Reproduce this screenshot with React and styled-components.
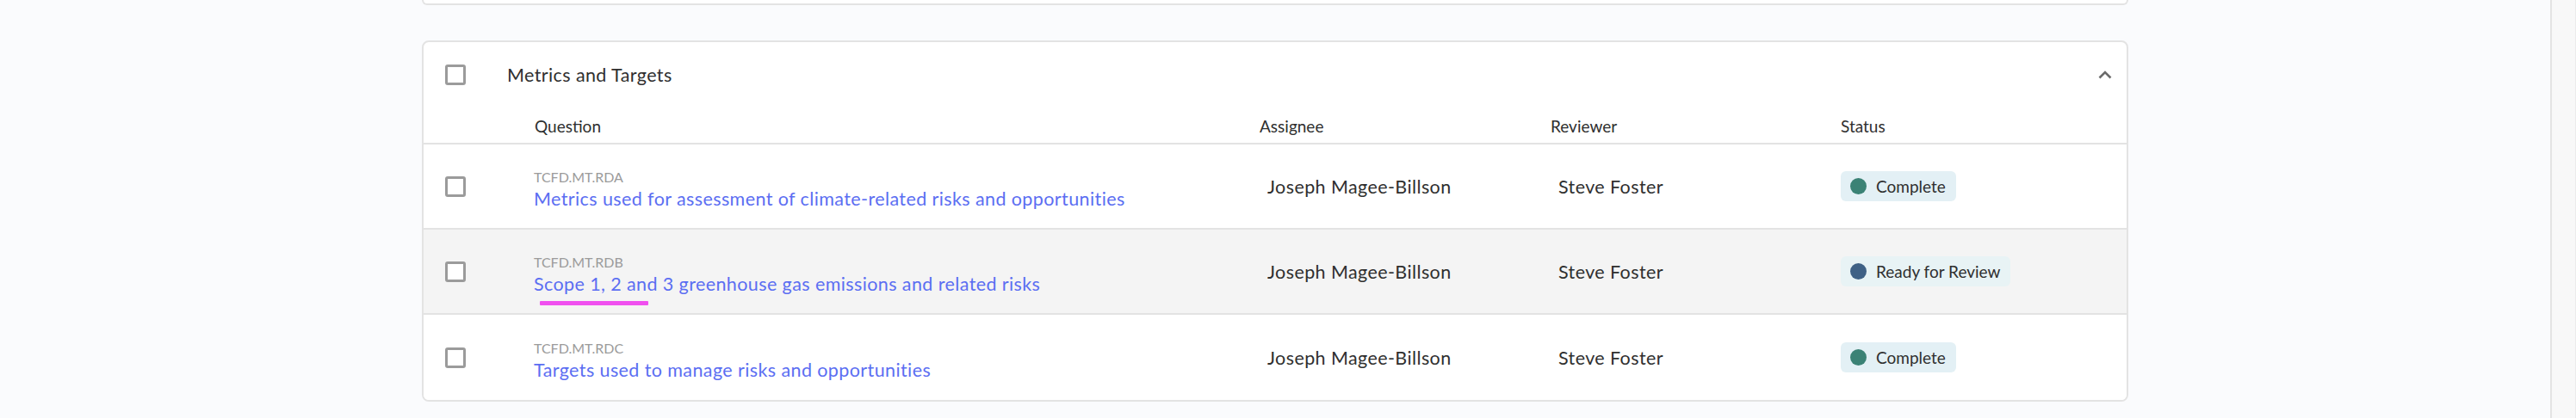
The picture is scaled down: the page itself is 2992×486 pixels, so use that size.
import React from "react";
import styled, { createGlobalStyle } from "styled-components";

const GlobalStyle = createGlobalStyle`
  html, body {
    margin: 0;
    padding: 0;
    background: #fafbfd;
    font-family: "Lato", "Noto Sans", sans-serif;
    color: #333;
  }
  #root { min-height: 486px; }
`;

const Page = styled.div`
  display: flex;
  height: 486px;
  overflow: hidden;
`;

const Main = styled.main`
  flex: 1;
  display: flex;
  flex-direction: column;
  align-items: center;
`;

const ScrollTrack = styled.div`
  box-sizing: content-box;
  width: 27px;
  border-left: 2px solid #e4e4e4;
  border-right: 1px solid #ececec;
  background: #f8f8f8;
`;

const PrevCardEdge = styled.div`
  box-sizing: border-box;
  width: 1982px;
  height: 6px;
  background: #fff;
  border: 2px solid #e3e3e3;
  border-top: none;
  border-radius: 0 0 8px 8px;
`;

const Card = styled.section`
  box-sizing: border-box;
  width: 1982px;
  margin-top: 41px;
  background: #fff;
  border: 2px solid #e3e3e3;
  border-radius: 8px;
  overflow: hidden;
`;

const CardHeader = styled.div`
  display: flex;
  align-items: center;
  height: 76px;
  padding: 0 17px 0 25px;
`;

const Title = styled.h3`
  flex: 1;
  margin: 0 0 0 48px;
  font-size: 21.5px;
  font-weight: 400;
  letter-spacing: 0.4px;
  color: #2f2f2f;
`;

const Checkbox = styled.span`
  box-sizing: border-box;
  display: inline-block;
  width: 24px;
  height: 24px;
  border: 3px solid #9b9b9b;
  border-radius: 3px;
  background: #fff;
`;

const Chevron = styled.svg`
  display: block;
  width: 16px;
  height: 10px;
`;

const columns = "128px 843px 338px 337px 1fr";

const HeadRow = styled.div`
  display: grid;
  grid-template-columns: ${columns};
  align-items: center;
  box-sizing: border-box;
  height: 43px;
  padding-top: 2px;
  border-bottom: 2px solid #e3e3e3;
`;

const HeadCell = styled.div`
  font-size: 19px;
  color: #2f2f2f;
  padding-left: ${(p) => (p.$first ? "1px" : "0")};
`;

const Row = styled.div`
  display: grid;
  grid-template-columns: ${columns};
  align-items: center;
  height: 99px;
  box-sizing: border-box;
  background: ${(p) => (p.$highlight ? "#f4f4f4" : "#fff")};
  border-bottom: ${(p) => (p.$last ? "none" : "2px solid #e3e3e3")};
`;

const CheckCell = styled.div`
  padding-left: 25px;
  display: flex;
  align-items: center;
`;

const QuestionCell = styled.div`
  display: flex;
  flex-direction: column;
  align-items: flex-start;
  padding-top: 6px;
`;

const Code = styled.span`
  font-size: 16px;
  line-height: 22px;
  color: #9b9b9b;
`;

const LinkText = styled.a`
  position: relative;
  display: inline-block;
  font-size: 21.5px;
  letter-spacing: 0.4px;
  line-height: 28px;
  color: #5b6ef2;
  text-decoration: none;
`;

const Squiggle = styled.span`
  position: absolute;
  left: 7px;
  top: calc(100% + 6px);
  width: 126px;
  height: 5px;
  background: #f050ef;
  border-radius: 1px;
`;

const PersonCell = styled.div`
  padding-left: 9px;
  font-size: 21.5px;
  letter-spacing: 0.4px;
  color: #2f2f2f;
`;

const StatusCell = styled.div`
  display: flex;
`;

const Pill = styled.span`
  display: inline-flex;
  align-items: center;
  gap: 11px;
  height: 35px;
  padding: 0 12px 0 11px;
  background: ${(p) => (p.$review ? "#e8f3f5" : "#e3f0f5")};
  border-radius: 6px;
  font-size: 19px;
  color: #2f2f2f;
`;

const Dot = styled.span`
  width: 19px;
  height: 19px;
  border-radius: 50%;
  background: ${(p) => p.$color};
`;

const rows = [
  {
    code: "TCFD.MT.RDA",
    question: "Metrics used for assessment of climate-related risks and opportunities",
    assignee: "Joseph Magee-Billson",
    reviewer: "Steve Foster",
    status: "Complete",
  },
  {
    code: "TCFD.MT.RDB",
    question: "Scope 1, 2 and 3 greenhouse gas emissions and related risks",
    assignee: "Joseph Magee-Billson",
    reviewer: "Steve Foster",
    status: "Ready for Review",
    highlight: true,
    mark: true,
  },
  {
    code: "TCFD.MT.RDC",
    question: "Targets used to manage risks and opportunities",
    assignee: "Joseph Magee-Billson",
    reviewer: "Steve Foster",
    status: "Complete",
  },
];

export default function App() {
  return (
    <>
      <GlobalStyle />
      <Page>
        <Main>
          <PrevCardEdge />
          <Card>
            <CardHeader>
              <Checkbox />
              <Title>Metrics and Targets</Title>
              <Chevron viewBox="0 0 16 10">
                <polyline
                  points="1.5,8.5 8,2 14.5,8.5"
                  fill="none"
                  stroke="#6b6b6b"
                  strokeWidth="2.6"
                />
              </Chevron>
            </CardHeader>
            <HeadRow>
              <div />
              <HeadCell $first>Question</HeadCell>
              <HeadCell>Assignee</HeadCell>
              <HeadCell>Reviewer</HeadCell>
              <HeadCell>Status</HeadCell>
            </HeadRow>
            {rows.map((r, i) => (
              <Row key={r.code} $highlight={r.highlight} $last={i === rows.length - 1}>
                <CheckCell>
                  <Checkbox />
                </CheckCell>
                <QuestionCell>
                  <Code>{r.code}</Code>
                  <LinkText href="#">
                    {r.question}
                    {r.mark && <Squiggle />}
                  </LinkText>
                </QuestionCell>
                <PersonCell>{r.assignee}</PersonCell>
                <PersonCell>{r.reviewer}</PersonCell>
                <StatusCell>
                  <Pill $review={r.status !== "Complete"}>
                    <Dot $color={r.status === "Complete" ? "#3b8275" : "#3f6185"} />
                    {r.status}
                  </Pill>
                </StatusCell>
              </Row>
            ))}
          </Card>
        </Main>
        <ScrollTrack />
      </Page>
    </>
  );
}
